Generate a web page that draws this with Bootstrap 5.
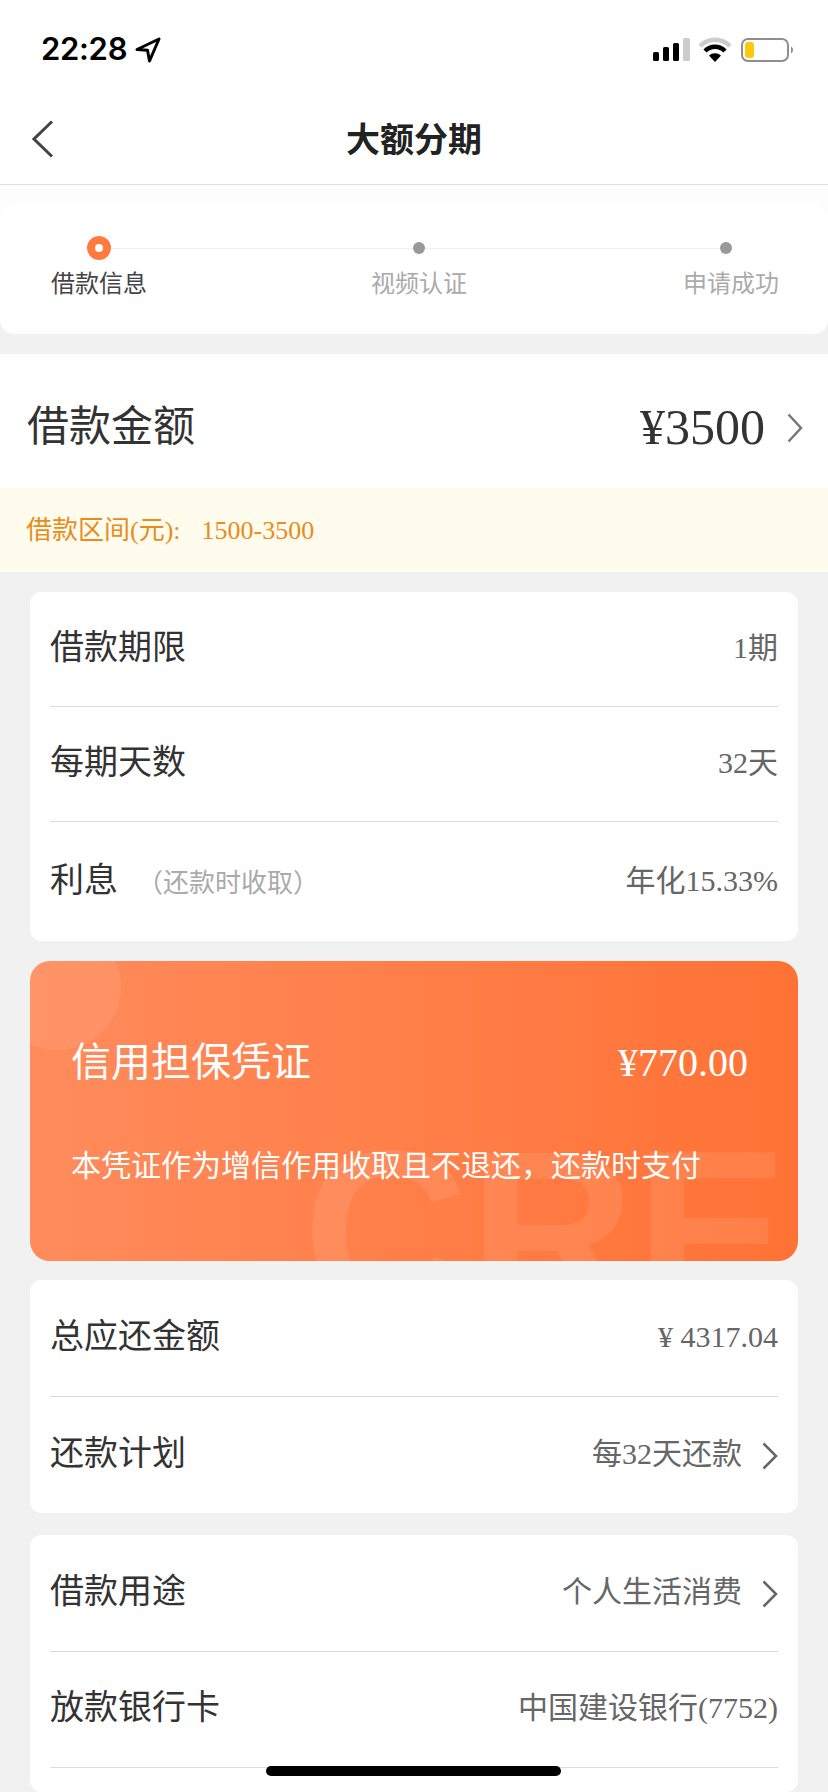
<!DOCTYPE html>
<html lang="zh-CN">
<head>
    <meta charset="UTF-8">
    <meta name="viewport" content="width=device-width, initial-scale=1.0">
    <title>大额分期</title>
    <link href="https://cdn.jsdelivr.net/npm/bootstrap@5.3.0/dist/css/bootstrap.min.css" rel="stylesheet">
    <style>
        html, body { height: 1792px; overflow: hidden; }
        body { background: #f1f1f1; font-family: "Liberation Serif", "Noto Sans CJK SC", serif; color: #333; position: relative; }
        .status-row { height: 95px; padding: 4px 33px 0 41px; background: #fff; }
        .clock { font-family: "Inter", "Liberation Sans", sans-serif; font-size: 31px; font-weight: 600; color: #000; letter-spacing: -.3px; }
        .top-bar { height: 90px; background: #fff; border-bottom: 1px solid #dedede; padding-left: 32px; }
        .top-bar svg { margin-bottom: 2px; }
        .top-title { font-family: "Noto Sans CJK SC", sans-serif; font-size: 34px; font-weight: 700; color: #222; line-height: 1; left: 0; right: 0; margin-bottom: 4px; }
        .steps-wrap { background: linear-gradient(#fdfdfd 50%, #f1f1f1 50%); padding-top: 19px; }
        .steps-box { height: 130px; background: #fff; border-radius: 14px; padding: 32px 49px 0 51px; }
        .steps-line { height: 1px; background: #f0f0f0; left: 98px; right: 104px; top: 44px; }
        .step-label { font-size: 24px; line-height: 34px; color: #aaa; margin-top: 7px; }
        .step-on .step-label { color: #444; }
        .step-dot { width: 12px; height: 12px; margin: 6px 0; background: #999; border-radius: 50%; z-index: 1; }
        .step-on .step-dot { width: 24px; height: 24px; margin: 0; background: #fff; border: 8px solid #ff7a3c; }
        .step-mid { margin-left: 8px; }
        .step-end .step-dot { margin-right: 10px; }
        .amount-row { height: 134px; margin-top: 20px; background: #fff; padding: 12px 25px 0 27px; }
        .amount-label { font-size: 42px; color: #333; }
        .amount-num { font-size: 50px; color: #333; margin-right: 22px; }
        .amount-row svg { margin-top: 2px; }
        .range-row { height: 84px; background: #fffcee; padding-left: 26px; font-size: 26px; color: #e98c1c; }
        .range-num { margin-left: 21px; }
        .info-box { margin: 20px 30px 0; background: #fff; border-radius: 12px; padding: 0 20px; }
        .box-plan { margin-top: 19px; }
        .box-bank { margin-top: 22px; }
        .info-row { height: 116.5px; padding-bottom: 3px; border-bottom: 1px solid #dcdcdc; }
        .info-row:last-child { border-bottom: 0; }
        .row-short { height: 115px; }
        .row-tall { height: 119px; }
        .row-cut { height: 24px; padding: 0; }
        .info-label { font-size: 34px; color: #333; }
        .info-note { font-size: 26px; color: #aaa; margin-left: 19px; }
        .info-value { font-size: 30px; color: #666; }
        .info-value svg { margin: 6px 0 0 20px; }
        .promo-box { height: 300px; margin: 20px 30px 0; border-radius: 20px; background: linear-gradient(90deg, #ff8b5c, #ff7235); color: #fff; padding: 0 50px 0 41px; overflow: hidden; }
        .promo-circle { width: 126px; height: 126px; left: -35px; top: -37px; background: rgba(255,255,255,.08); border-radius: 50%; }
        .promo-mark { font-family: "Liberation Sans", sans-serif; font-weight: 700; font-size: 230px; line-height: 1; color: rgba(255,255,255,.09); left: 273px; top: 156px; }
        .promo-head { height: 104px; margin-top: 50px; }
        .promo-title { font-size: 40px; }
        .promo-num { font-size: 40px; }
        .promo-text { font-size: 30px; margin-top: 29px; line-height: 44px; }
        .home-bar { width: 295px; height: 10px; left: 266px; top: 1766px; background: #000; border-radius: 5px; }
    </style>
</head>
<body>
    <div class="status-row d-flex justify-content-between align-items-center">
        <div class="d-flex align-items-center gap-2">
            <span class="clock">22:28</span>
            <svg width="26" height="26" viewBox="0 0 26 26"><path d="M24 2 2 12.500l10.500.8L14.500 24z" fill="none" stroke="#000" stroke-width="3" stroke-linejoin="round"/></svg>
        </div>
        <svg width="142" height="26" viewBox="0 0 142 26">
            <rect x="0" y="15" width="6" height="9" rx="1.5"/>
            <rect x="10" y="10" width="6" height="14" rx="1.5"/>
            <rect x="20" y="6" width="6" height="18" rx="1.5"/>
            <rect x="30" y="1" width="7" height="23" rx="1.5" fill="#ccc"/>
            <path d="M47 9a21 21 0 0 1 30 0" fill="none" stroke="#ccc" stroke-width="4.5"/>
            <path d="M52 14a14 14 0 0 1 20 0" fill="none" stroke="#000" stroke-width="4.5"/>
            <path d="M56 18.500a9 9 0 0 1 12 0L62 25z"/>
            <rect x="89" y="2" width="46" height="22" rx="6" fill="#fff" stroke="#8e8e8e" stroke-width="2"/>
            <rect x="92" y="5" width="9" height="16" rx="3" fill="#fdc90f"/>
            <path d="M138 9.500a4 4 0 0 1 0 7z" fill="#8e8e8e"/>
        </svg>
    </div>

    <div class="top-bar d-flex align-items-center position-relative">
        <svg width="22" height="38" viewBox="0 0 22 38"><path d="M20 1.500 2 19l18 17.500" fill="none" stroke="#444" stroke-width="3"/></svg>
        <div class="top-title position-absolute text-center">大额分期</div>
    </div>

    <div class="steps-wrap">
        <div class="steps-box d-flex justify-content-between position-relative">
            <div class="steps-line position-absolute"></div>
            <div class="step-on d-flex flex-column align-items-center">
                <div class="step-dot"></div>
                <div class="step-label">借款信息</div>
            </div>
            <div class="step-mid d-flex flex-column align-items-center">
                <div class="step-dot"></div>
                <div class="step-label">视频认证</div>
            </div>
            <div class="step-end d-flex flex-column align-items-center">
                <div class="step-dot"></div>
                <div class="step-label">申请成功</div>
            </div>
        </div>
    </div>

    <div class="amount-row d-flex justify-content-between align-items-center">
        <span class="amount-label">借款金额</span>
        <div class="d-flex align-items-center">
            <span class="amount-num">¥3500</span>
            <svg width="16" height="30" viewBox="0 0 16 30"><path d="M1.500 1.500 14 15 1.500 28.500" fill="none" stroke="#777" stroke-width="2.500"/></svg>
        </div>
    </div>
    <div class="range-row d-flex align-items-center">
        <span>借款区间(元):</span><span class="range-num">1500-3500</span>
    </div>

    <div class="info-box">
        <div class="info-row row-short d-flex justify-content-between align-items-center">
            <span class="info-label">借款期限</span><span class="info-value">1期</span>
        </div>
        <div class="info-row row-short d-flex justify-content-between align-items-center">
            <span class="info-label">每期天数</span><span class="info-value">32天</span>
        </div>
        <div class="info-row row-tall d-flex justify-content-between align-items-center">
            <span><span class="info-label">利息</span><span class="info-note">&#65288;还款时收取&#65289;</span></span>
            <span class="info-value">年化15.33%</span>
        </div>
    </div>

    <div class="promo-box position-relative">
        <div class="promo-circle position-absolute"></div>
        <div class="promo-mark position-absolute">CRE</div>
        <div class="promo-head d-flex justify-content-between align-items-center position-relative">
            <span class="promo-title">信用担保凭证</span><span class="promo-num">¥770.00</span>
        </div>
        <div class="promo-text position-relative">本凭证作为增信作用收取且不退还&#65292;还款时支付</div>
    </div>

    <div class="info-box box-plan">
        <div class="info-row d-flex justify-content-between align-items-center">
            <span class="info-label">总应还金额</span><span class="info-value">¥ 4317.04</span>
        </div>
        <div class="info-row d-flex justify-content-between align-items-center">
            <span class="info-label">还款计划</span>
            <span class="info-value d-flex align-items-center">每32天还款<svg width="16" height="28" viewBox="0 0 16 28"><path d="M1.500 1.500 14 14 1.500 26.500" fill="none" stroke="#666" stroke-width="2.500"/></svg></span>
        </div>
    </div>

    <div class="info-box box-bank">
        <div class="info-row d-flex justify-content-between align-items-center">
            <span class="info-label">借款用途</span>
            <span class="info-value d-flex align-items-center">个人生活消费<svg width="16" height="28" viewBox="0 0 16 28"><path d="M1.500 1.500 14 14 1.500 26.500" fill="none" stroke="#666" stroke-width="2.500"/></svg></span>
        </div>
        <div class="info-row d-flex justify-content-between align-items-center">
            <span class="info-label">放款银行卡</span><span class="info-value">中国建设银行(7752)</span>
        </div>
        <div class="info-row row-cut"></div>
    </div>

    <div class="home-bar position-absolute"></div>
    <script src="https://cdn.jsdelivr.net/npm/bootstrap@5.3.0/dist/js/bootstrap.bundle.min.js"></script>
</body>
</html>
